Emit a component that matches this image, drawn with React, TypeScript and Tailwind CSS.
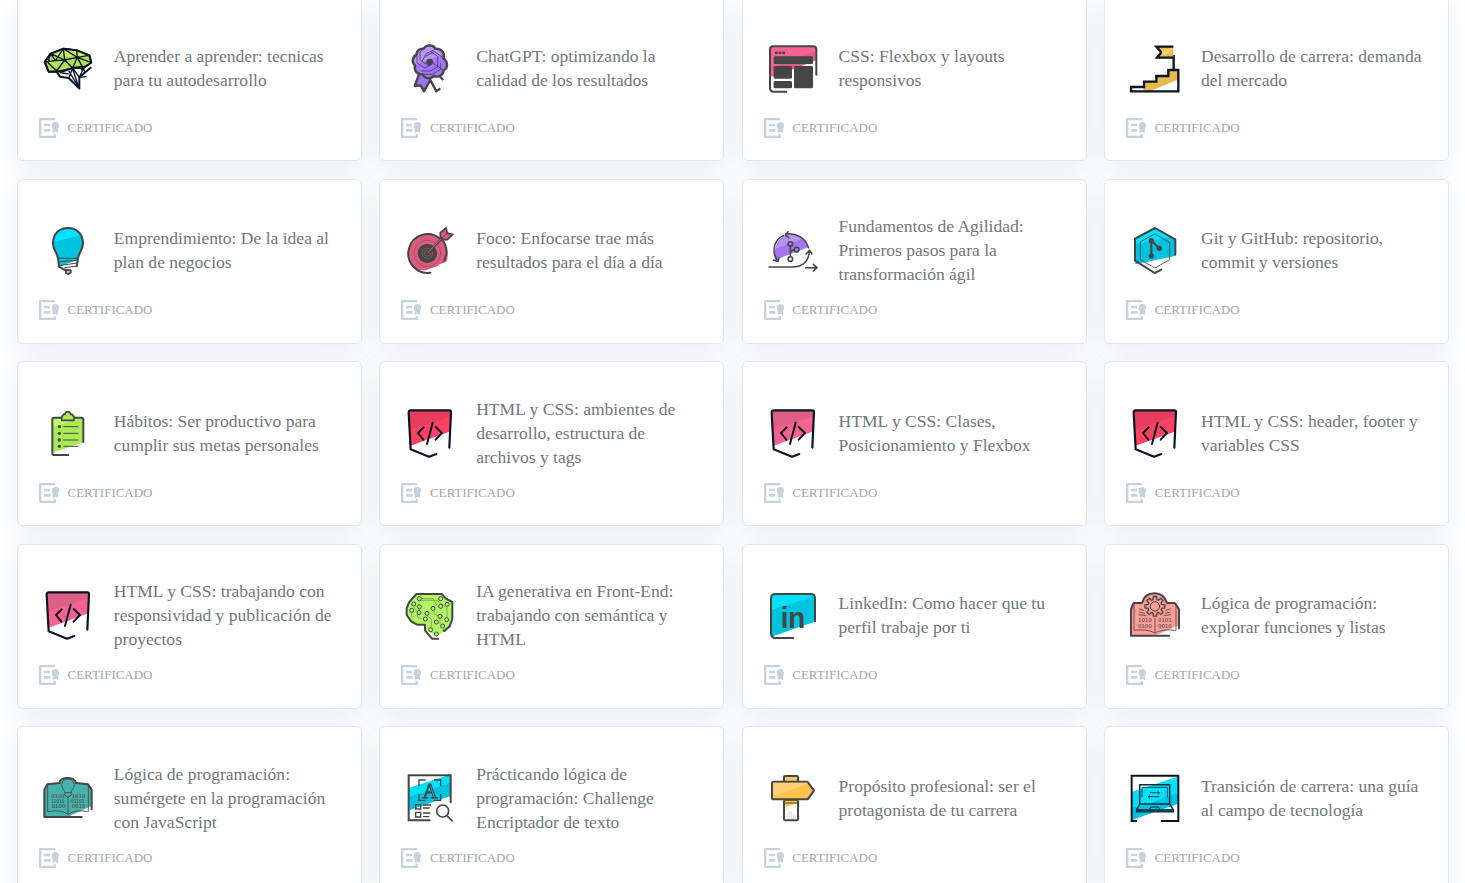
import type { ReactNode } from 'react';

const DARK = '#454545';
const NAVY = '#071527';

function Brain() {
  return (
    <g fill="none" stroke={NAVY} strokeWidth="5" strokeLinejoin="round">
      <path d="M26 62 L44 37 L82 22 L122 27 L160 42 L166 64 L146 76 L112 79 L84 90 L62 91 L38 91Z" fill="#b5e15a" />
      <path d="M82 22 L122 27 L160 42 L140 48 L60 40Z" fill="#c4f26b" stroke="none" />
      <path d="M26 62 L44 37 L82 22 L122 27 L160 42 L166 64 M26 62 L38 91 L62 91 L72 106 L98 110 L130 142 L130 108 L146 94 L166 78" strokeWidth="6" />
      <path d="M26 62 L58 58 L86 56 L62 89 L36 64 L44 37 L58 58 L82 22 L86 56 L44 37 M82 22 L124 48 L86 56 L110 80 L124 48 L160 42 M122 27 L124 48 L142 82 L110 80 L62 91 M124 48 L166 64 L142 82 L148 94 M110 80 L98 110 M110 80 L130 108 L142 82 M98 88 L130 142 L110 84 M72 94 L98 98 M130 108 L152 106" strokeWidth="4" />
      <g fill={NAVY} stroke="none">
        <circle cx="86" cy="56" r="5" /><circle cx="124" cy="48" r="5" /><circle cx="62" cy="89" r="5" /><circle cx="110" cy="80" r="5" /><circle cx="139" cy="83" r="5" />
      </g>
    </g>
  );
}

function Ribbon() {
  return (
    <g strokeLinejoin="round">
      <path d="M74 118 L59 154 L77 153 L88 170 L106 137 L128 124Z" fill="#a070f5" />
      <path d="M72 120 L59 155 L77 153 L87 171 L106 137 L124 171 L136 162 M128 120 L145 137" fill="none" stroke={DARK} strokeWidth="7" />
      <path d="M86 43 C94 29 116 31 121 43 C140 42 151 57 145 72 C160 81 159 103 146 108 C145 123 128 131 116 124 C104 137 87 132 84 120 C67 122 56 109 60 94 C49 83 52 67 65 61 C64 49 75 41 86 43Z" fill="#a374f8" />
      <path d="M65 61 C64 49 75 41 86 43 C94 33 116 34 121 43 L144 60 L60 92 C52 82 53 68 65 61Z" fill="#b993fb" />
      <path d="M86 43 C94 29 116 31 121 43 C140 42 151 57 145 72 C160 81 159 103 146 108 C145 123 128 131 116 124 C104 137 87 132 84 120 C67 122 56 109 60 94 C49 83 52 67 65 61 C64 49 75 41 86 43Z" fill="none" stroke={DARK} strokeWidth="7" />
      <circle cx="104" cy="83" r="10" fill={DARK} />
      <path d="M66 64 V86 L90 101 L120 84 M86 45 L75 52 V78 L101 93 M78 110 H106 L128 98 V66 L108 53 M144 106 L118 90 M82 120 L112 120 L137 105 V86 M120 45 L94 58 L80 82 M92 66 L118 52 L142 68" fill="none" stroke="#4f4563" strokeWidth="2.8" />
    </g>
  );
}

function Layout() {
  return (
    <g fill="none" stroke={DARK} strokeWidth="6" strokeLinecap="round" strokeLinejoin="round">
      <path d="M30 42 Q30 36 38 36 H159 Q168 36 168 44 V76 L30 129Z" fill="#f6638e" stroke="none" />
      <path d="M168 51 L84 80 L40 97 V128 L168 78Z" fill="#de5f84" stroke="none" />
      <path d="M79 172 H40 Q30 172 30 160 V46 Q30 36 40 36 H159 Q169 36 169 46 V121" />
      <g fill={DARK} stroke="none">
        <circle cx="49" cy="55" r="4.5" /><circle cx="60" cy="55" r="4.5" /><circle cx="71" cy="55" r="4.5" />
        <rect x="41" y="66" width="118" height="23" rx="4" /><rect x="41" y="95" width="55" height="38" rx="4" />
        <rect x="41" y="140" width="55" height="22" rx="4" /><rect x="102" y="95" width="57" height="67" rx="4" />
      </g>
    </g>
  );
}

function Stairs() {
  return (
    <g fill="none" stroke={NAVY} strokeWidth="7">
      <path d="M64 170 V142 H103 V125 H139 V106 H168 V136 L84 170Z" fill="#e8b94d" stroke="none" />
      <path d="M27 171 V158 H66 V142 H103 V125 H139 V107 H169 V171Z M155 104 V62" />
      <path d="M154 37 H103 L118 54 L105 70 H154" fill="#e8b94d" />
      <path d="M120 49 L149 41 V53 L121 64Z" fill="#f7cf72" stroke="none" />
    </g>
  );
}

function Bulb() {
  return (
    <g fill="none" stroke={DARK} strokeWidth="6" strokeLinecap="round" strokeLinejoin="round">
      <path d="M67 122 C64 99 50 96 51 73 C53 44 72 30 96 30 C120 30 139 45 141 73 C142 96 128 99 125 125 L68 146Z" fill="#00c3df" stroke="none" />
      <path d="M52 72 C54 46 72 32 96 32 C115 32 128 40 135 52Z" fill="#00e1ff" stroke="none" />
      <path d="M69 143 L66 122 C63 99 50 98 51 73 C53 44 72 30 96 30 C120 30 139 45 141 73 C142 98 127 102 125 126 L122 145 M68 145 L84 155 H92 M90 158 L90 165 L97 168 L104 164 L104 157 H92" />
      <path d="M67 121 H125 M74 131 L125 127 M75 142 L124 135 M86 149 L123 144" strokeWidth="3" />
    </g>
  );
}

function Target() {
  return (
    <g fill="none" stroke={DARK} strokeWidth="6" strokeLinecap="round">
      <path d="M66 160 A59 59 0 1 1 151 132Z" fill="#df5b7d" stroke="none" />
      <path d="M103 164 A58 58 0 1 1 132 62 M136 62 Q154 82 151 108 L145 128" />
      <path d="M70 145 L142 125 L124 145 L83 158Z" fill="#df5b7d" stroke="none" />
      <circle cx="94" cy="106" r="29" fill={DARK} stroke="none" />
      <circle cx="94" cy="106" r="40" strokeWidth="2" stroke="#8a4557" />
      <circle cx="94" cy="106" r="16" stroke="#c7607a" strokeWidth="1.5" />
      <circle cx="94" cy="106" r="9" stroke="#c7607a" strokeWidth="1.5" />
      <path d="M95 104 L136 64" strokeWidth="7" /><path d="M95 104 L145 54" stroke="#df5b7d" strokeWidth="3" />
      <path d="M133 56 L133 44 L150 30 L154 45 L170 49 L154 65 L141 65Z" fill="#df5b7d" strokeWidth="5" />
      <path d="M136 62 L154 46" strokeWidth="3" />
    </g>
  );
}

function Agile() {
  return (
    <g fill="none" stroke={DARK} strokeWidth="4.5" strokeLinecap="round" strokeLinejoin="round">
      <path d="M44 126 C39 68 70 45 98 49 C124 50 142 69 144 88Z" fill="#a475ef" stroke="none" />
      <path d="M46 92 C58 58 83 47 104 50 Q119 53 129 62Z" fill="#b992f5" stroke="none" />
      <path d="M53 128 C29 94 49 62 70 53 M77 48 C107 43 138 61 145 89 M84 41 L76 51 L86 59 M40 126 L54 131 L57 119 M27 147 H92 Q145 149 148 99 M138 108 L149 97 L156 108 M137 149 H171 M160 139 L171 149 L160 159" />
      <circle cx="91" cy="78" r="7" /><circle cx="110" cy="95" r="7" /><circle cx="91" cy="123" r="7" />
      <path d="M91 85 V115 M91 106 Q92 96 103 96" />
    </g>
  );
}

function Git() {
  return (
    <g fill="none" stroke={DARK} strokeWidth="6" strokeLinecap="round" strokeLinejoin="round">
      <path d="M99 31 L159 63 V114 L40 139 V62Z" fill="#00c3df" stroke="none" />
      <path d="M40 62 L99 31 L145 57 L40 79Z" fill="#00e1ff" stroke="none" />
      <path d="M39 128 V62 L99 30 L160 64 V110 M39 128 L98 165 L118 155" />
      <path d="M99 48 L143 73 V125 L99 150 L55 125 V73Z" strokeWidth="2.5" />
      <g fill={DARK} stroke="none"><circle cx="88" cy="68" r="8" /><circle cx="112" cy="91" r="8" /><circle cx="88" cy="114" r="8" /></g>
      <path d="M88 67 V114 M86 66 L111 90" />
    </g>
  );
}

function Clipboard() {
  return (
    <g fill="none" stroke={DARK} strokeWidth="6" strokeLinecap="round" strokeLinejoin="round">
      <path d="M51 53 H143 V127 L51 158Z" fill="#a9ea57" stroke="none" />
      <path d="M51 53 H137 L51 82Z" fill="#bfff6b" stroke="none" />
      <path d="M98 165 H53 Q50 165 50 160 V57 Q50 53 56 53 H137 Q143 53 143 59 V126" />
      <path d="M78 61 V51 L84 43 H88 Q89 35 96 35 Q103 35 105 43 H109 L115 50 V61Z" fill="#aeea57" strokeWidth="5" />
      {[80, 100, 120, 139].map((y) => (
        <g key={y}><circle cx="71" cy={y} r="5" fill={DARK} stroke="none" /><path d={`M84 ${y} H127`} strokeWidth="3" /></g>
      ))}
    </g>
  );
}

function Shield({ light, dark }: { light: string; dark: string }) {
  return (
    <g fill="none" stroke={NAVY} strokeWidth="6.5" strokeLinecap="round" strokeLinejoin="round">
      <path d="M38 32 H165 L164 94 L44 137Z" fill={light} stroke="none" />
      <path d="M38 32 H165 V49 L42 88Z" fill={dark} stroke="none" />
      <path d="M160 143 L165 36 Q165 31 160 31 H45 Q37 31 38 39 L44 148 L99 170 L121 162" />
      <path d="M83 82 L66 99 L82 119 M110 68 L93 132 M119 81 L138 99 L119 119" strokeWidth="6" />
    </g>
  );
}

function Circuit() {
  const nodes = [[70,44],[53,60],[70,68],[47,79],[69,86],[93,88],[88,105],[111,73],[134,67],[134,44],[153,61],[132,97],[121,114],[152,107],[140,126],[104,137],[121,150]];
  return (
    <g fill="none" stroke={DARK} strokeWidth="6" strokeLinejoin="round">
      <path d="M60 31 H137 L151 46 L169 53 V104 L160 132 L121 158 L90 138 V121 H48 L33 100 V74 L43 47Z" fill="#b0f566" stroke="none" />
      <path d="M129 164 H108 L87 139 V122 H63 L46 112 L32 93 V73 L39 55 L61 30 H137 L150 44 L169 54 V105 L161 127 L145 141 L141 138" />
      <path d="M77 44 H111 L125 67 M75 49 H123 L146 67 M70 75 L63 98 L77 104 M91 94 L106 105 V131 M116 80 L113 88 L128 97 M132 104 V120 M153 68 V100 M52 68 L67 84 M47 86 V101" strokeWidth="1.5" stroke="#527039" />
      {nodes.map(([x, y]) => <circle key={`${x}-${y}`} cx={x} cy={y} r="6" fill="#b7f473" strokeWidth="3" />)}
    </g>
  );
}

function LinkedIn() {
  return (
    <g>
      <path d="M40 30 H164 V113 L34 158 V39Z" fill="#00c3df" />
      <path d="M40 30 H164 V36 L34 78 V39Z" fill="#00e1ff" />
      <path d="M100 162 H47 Q33 162 33 147 V43 Q33 30 47 30 H152 Q165 30 165 43 V112" fill="none" stroke={DARK} strokeWidth="6" strokeLinecap="round" />
      <text x="62" y="131" fontFamily="Liberation Sans, sans-serif" fontWeight="700" fontSize="88" textLength="74" lengthAdjust="spacingAndGlyphs" fill={DARK}>in</text>
    </g>
  );
}

function Digits({ x, y, children }: { x: number; y: number; children: string }) {
  return <text x={x} y={y} fontFamily="Liberation Sans, sans-serif" fontWeight="700" fontSize="16" textLength="41" lengthAdjust="spacingAndGlyphs" fill={DARK} fillOpacity="0.75">{children}</text>;
}

const gearOutline = Array.from({ length: 8 }, (_, tooth) =>
  [[-0.27, 21], [-0.17, 30], [0.17, 30], [0.27, 21]].map(([offset, radius]) => {
    const angle = (tooth * Math.PI) / 4 + offset;
    return `${(101 + radius * Math.cos(angle)).toFixed(1)},${(67 + radius * Math.sin(angle)).toFixed(1)}`;
  }).join(' '),
).join(' ');

function GearBook() {
  return (
    <g fill="none" stroke={DARK} strokeWidth="6" strokeLinecap="round" strokeLinejoin="round">
      <path d="M30 75 L38 57 H63 C67 37 80 28 100 28 C119 28 132 40 136 57 H162 L173 75 V124 L106 153 H30Z" fill="#ff9d99" stroke="none" />
      <path d="M143 155 H29 V75 L37 57 H62 C67 37 81 28 100 28 C119 28 131 39 137 57 H160 L173 75 V133" />
      <path d="M38 58 V139 Q78 134 101 147 Q124 134 164 139 V58 M101 102 V145 M54 75 L68 79 M54 84 L70 88 M53 92 L74 95 M147 75 L134 79 M147 84 L132 88 M148 92 L128 95" strokeWidth="2.5" />
      <polygon points={gearOutline} fill="#ff9d99" strokeWidth="4" />
      <circle cx="101" cy="67" r="14" strokeWidth="3" />
      <g stroke="none"><Digits x={50} y={115}>1010</Digits><Digits x={110} y={115}>0101</Digits><Digits x={50} y={131}>0100</Digits><Digits x={110} y={131}>0010</Digits></g>
    </g>
  );
}

function BulbBook() {
  return (
    <g fill="none" stroke={DARK} strokeWidth="6" strokeLinecap="round" strokeLinejoin="round">
      <path d="M25 70 L34 53 L71 51 C75 32 115 32 119 51 L156 53 L167 70 V119 L96 152 H25Z" fill="#47b3ad" stroke="none" />
      <path d="M137 153 H25 V71 L34 55 L70 51 C73 31 117 31 120 51 L156 55 L167 71 V130" />
      <path d="M35 56 V137 Q75 129 96 145 Q117 130 157 137 V56 M96 93 V144 M87 82 C87 72 77 69 77 56 C79 33 113 34 115 56 C115 69 105 71 105 82 V88 L96 94 L87 88 Z M88 80 H105" strokeWidth="2.5" />
      <g stroke="none"><Digits x={46} y={96}>0101</Digits><Digits x={107} y={96}>1010</Digits><Digits x={45} y={111}>11010</Digits><Digits x={105} y={111}>01101</Digits><Digits x={47} y={127}>0100</Digits><Digits x={107} y={127}>0010</Digits></g>
    </g>
  );
}

function Scan() {
  return (
    <g fill="none" stroke={DARK} strokeWidth="6">
      <path d="M40 67 L151 31 L163 30 V91 L40 134Z" fill="#00c3df" stroke="none" /><path d="M40 67 L150 31 H163 V51 L40 94Z" fill="#00e1ff" stroke="none" />
      <path d="M164 110 V29 H38 V164 H101" strokeLinecap="round" />
      <path d="M69 62 V43 H89 M114 43 H134 V62 M69 85 V104 H89 M114 104 H134 V85 M59 117 H74 V130 H59Z M59 140 H74 V154 H59Z M81 118 H105 M81 127 H101 M81 142 H103 M81 153 H100" strokeWidth="4" />
      <text x="80" y="96" fontFamily="Liberation Serif, serif" fontSize="61" fill="#00c3df" stroke={DARK} strokeWidth="3">A</text>
      <circle cx="140" cy="136" r="18" fill="#fff" strokeWidth="5" /><path d="M153 150 L170 167" strokeWidth="5" />
    </g>
  );
}

function Sign() {
  return (
    <g fill="none" stroke={DARK} strokeWidth="6" strokeLinejoin="round">
      <path d="M72 48 V34 Q72 31 76 31 H110 Q114 31 114 35 V48" fill="#f9c769" />
      <rect x="72" y="103" width="42" height="61" rx="4" fill="#fff" /><path d="M75 105 H111 V112 L77 125Z" fill="#ffc24a" stroke="none" />
      <path d="M73 112 H113" strokeWidth="3" />
      <path d="M36 53 Q36 48 41 48 H142 L162 75 L143 101 H41 Q36 101 36 96Z" fill="#ffc24a" />
      <path d="M39 51 H140 L144 56 L39 91Z" fill="#fecf75" stroke="none" />
      <path d="M82 160 V143 M88 160 V137 M94 160 V137 M100 160 V143 M106 160 V148" stroke="#ddd" strokeWidth="3" />
    </g>
  );
}

function Laptop() {
  return (
    <g fill="none" stroke={NAVY} strokeWidth="6">
      <path d="M31 79 L170 33 V114 L31 163Z" fill="#00c3df" stroke="none" /><path d="M31 79 L170 33 V80 L80 114 L31 126Z" fill="#00e1ff" stroke="none" />
      <path d="M46 166 H30 V30 H170 V166 H118" />
      <path d="M54 57 H144 V115 L155 132 V138 H45 V132 L54 115Z M54 115 H144" strokeWidth="4.5" stroke="#0b2c40" />
      <path d="M61 95 V65 H137 V95" strokeWidth="3" stroke="#07495a" /><path d="M46 134 H154" strokeWidth="8" stroke="#0a4458" />
      <path d="M84 131 L87 124 H110 L115 131" strokeWidth="3" /><path d="M85 81 H114 L108 76 M114 81 L108 86 M113 93 H79 L85 88 M79 93 L85 98" strokeWidth="3" stroke="#454545" />
    </g>
  );
}

type Course = { lines: string[]; icon: ReactNode; box: string };

const pink = <Shield light="#f6638e" dark="#de5f84" />;
const red = <Shield light="#ff4163" dark="#e63e5c" />;

const courses: Course[] = [
  { lines: ['Aprender a aprender: tecnicas', 'para tu autodesarrollo'], icon: <Brain />, box: '-3 -16 192 192' },
  { lines: ['ChatGPT: optimizando la', 'calidad de los resultados'], icon: <Ribbon />, box: '6 5 192 192' },
  { lines: ['CSS: Flexbox y layouts', 'responsivos'], icon: <Layout />, box: '0 5 192 192' },
  { lines: ['Desarrollo de carrera: demanda', 'del mercado'], icon: <Stairs />, box: '0 5 192 192' },
  { lines: ['Emprendimiento: De la idea al', 'plan de negocios'], icon: <Bulb />, box: '-3 0 192 192' },
  { lines: ['Foco: Enfocarse trae más', 'resultados para el día a día'], icon: <Target />, box: '3 0 192 192' },
  { lines: ['Fundamentos de Agilidad:', 'Primeros pasos para la', 'transformación ágil'], icon: <Agile />, box: '0 0 192 192' },
  { lines: ['Git y GitHub: repositorio,', 'commit y versiones'], icon: <Git />, box: '0 0 192 192' },
  { lines: ['Hábitos: Ser productivo para', 'cumplir sus metas personales'], icon: <Clipboard />, box: '-2 3 192 192' },
  { lines: ['HTML y CSS: ambientes de', 'desarrollo, estructura de', 'archivos y tags'], icon: red, box: '3 3 192 192' },
  { lines: ['HTML y CSS: Clases,', 'Posicionamiento y Flexbox'], icon: pink, box: '3 3 192 192' },
  { lines: ['HTML y CSS: header, footer y', 'variables CSS'], icon: red, box: '3 3 192 192' },
  { lines: ['HTML y CSS: trabajando con', 'responsividad y publicación de', 'proyectos'], icon: pink, box: '3 3 192 192' },
  { lines: ['IA generativa en Front-End:', 'trabajando con semántica y', 'HTML'], icon: <Circuit />, box: '3 -3 192 192' },
  { lines: ['LinkedIn: Como hacer que tu', 'perfil trabaje por ti'], icon: <LinkedIn />, box: '0 -3 192 192' },
  { lines: ['Lógica de programación:', 'explorar funciones y listas'], icon: <GearBook />, box: '2 -3 192 192' },
  { lines: ['Lógica de programación:', 'sumérgete en la programación', 'con JavaScript'], icon: <BulbBook />, box: '-3 0 192 192' },
  { lines: ['Prácticando lógica de', 'programación: Challenge', 'Encriptador de texto'], icon: <Scan />, box: '3 1 192 192' },
  { lines: ['Propósito profesional: ser el', 'protagonista de tu carrera'], icon: <Sign />, box: '0 1 192 192' },
  { lines: ['Transición de carrera: una guía', 'al campo de tecnología'], icon: <Laptop />, box: '1 1 192 192' },
];

function CertificateIcon() {
  return (
    <svg className="size-5 shrink-0" viewBox="117 264 60 60" fill="#c5d3de">
      <path d="M165 264 V271 H124 V317 H161 V310 L168 314 V324 H121 Q117 324 117 320 V268 Q117 264 121 264Z" />
      <path d="M132 281 H150 V289 H132Z M132 297 H151 V305 H132Z" />
      <circle cx="166" cy="287" r="11" /><path d="M158 292 H174 V309 L166 305 L158 309Z" />
    </svg>
  );
}

function Card({ lines, icon, box }: Course) {
  return (
    <article className="flex h-[164.9px] flex-col rounded-md border border-[#e1e6ed] bg-white">
      <div className="mt-[34.5px] flex h-[72px] items-center pl-[17px]">
        <svg className="size-16 shrink-0" viewBox={box}>{icon}</svg>
        <h2 className="ml-[14.8px] text-[17.54px] leading-6 whitespace-nowrap text-[#6f7879]">
          {lines.map((line) => <span key={line} className="block">{line}</span>)}
        </h2>
      </div>
      <div className="mt-[14px] flex items-center gap-[8.5px] pl-[21px]">
        <CertificateIcon />
        <span className="text-[12.97px] leading-5 text-[#9ea8ae]">CERTIFICADO</span>
      </div>
    </article>
  );
}

export default function App() {
  return (
    <main className="h-screen overflow-hidden bg-white font-['Liberation_Serif',serif]">
      <div className="-mt-[3.7px] grid grid-cols-[repeat(4,344.8px)] gap-[17.6px] pl-[17px]">
        {courses.map((course, index) => (
          <div key={index} className="rounded-md shadow-[0_8px_32px_rgba(60,100,160,0.11)]">
            <div className="relative z-10"><Card {...course} /></div>
          </div>
        ))}
      </div>
    </main>
  );
}
